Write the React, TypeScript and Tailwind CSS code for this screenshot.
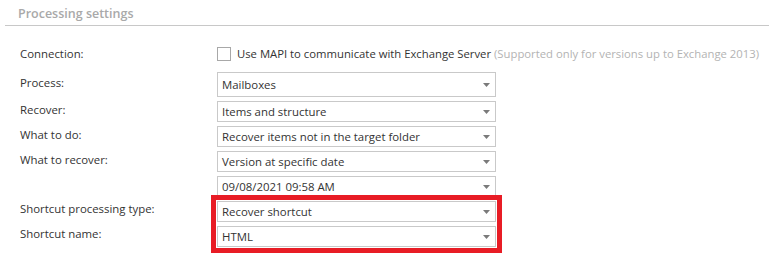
const FONT = "font-['Open_Sans',_'Noto_Sans',_sans-serif]"

function Caret() {
  return (
    <svg width="7" height="4" viewBox="0 0 7 4" className="shrink-0">
      <path d="M0 0h7L3.5 4z" fill="#7a7a7a" />
    </svg>
  )
}

function Dropdown({ value, tall }: { value: string; tall?: boolean }) {
  return (
    <div
      className={`flex w-[279px] items-center justify-between border border-[#c9c9c9] bg-white pl-[4px] pr-[5px] ${
        tall ? 'h-[25px]' : 'h-[21px]'
      }`}
    >
      <span className="whitespace-nowrap text-[11.4px] leading-none text-[#333]">{value}</span>
      <Caret />
    </div>
  )
}

function Row({ label, value, tall }: { label: string; value: string; tall?: boolean }) {
  return (
    <div className="flex items-center">
      <div className="-mt-[3px] w-[217px] shrink-0 pl-[20px] text-[11.4px] leading-none text-[#333]">{label}</div>
      <Dropdown value={value} tall={tall} />
    </div>
  )
}

export default function App() {
  return (
    <div className={`h-[256px] w-[769px] bg-white ${FONT}`}>
      <div className="ml-[5px] flex h-[26px] items-end border-b border-[#c8c8c8] pb-[5px] pl-[13px]">
        <span className="text-[12.5px] font-semibold leading-none text-[#a9a9a9]">Processing settings</span>
      </div>

      <div className="mt-[20px] flex h-[15px] items-center">
        <div className="w-[217px] shrink-0 pl-[20px] text-[11.4px] leading-none text-[#333]">Connection:</div>
        <div className="h-[14px] w-[14px] shrink-0 border border-[#a8a8a8] bg-white" />
        <span className="ml-[6px] whitespace-nowrap text-[11.3px] leading-none text-[#333]">
          Use MAPI to communicate with Exchange Server{' '}
          <span className="text-[#b3b3b3]">(Supported only for versions up to Exchange 2013)</span>
        </span>
      </div>

      <div className="mt-[11px] flex flex-col gap-[4px]">
        <Row label="Process:" value="Mailboxes" tall />
        <Row label="Recover:" value="Items and structure" />
        <Row label="What to do:" value="Recover items not in the target folder" />
        <Row label="What to recover:" value="Version at specific date" />
        <Row label="" value="09/08/2021 09:58 AM" />

        <div className="flex">
          <div className="flex w-[217px] shrink-0 flex-col gap-[4px] pl-[20px] text-[11.4px] leading-none text-[#333]">
            <div className="-mt-[3px] flex h-[21px] items-center">Shortcut processing type:</div>
            <div className="flex h-[21px] items-center">Shortcut name:</div>
          </div>
          <div className="flex flex-col gap-[4px] outline-[5px] outline-offset-[1px] outline-[#e81c25] outline-solid">
            <Dropdown value="Recover shortcut" />
            <Dropdown value="HTML" />
          </div>
        </div>
      </div>
    </div>
  )
}
